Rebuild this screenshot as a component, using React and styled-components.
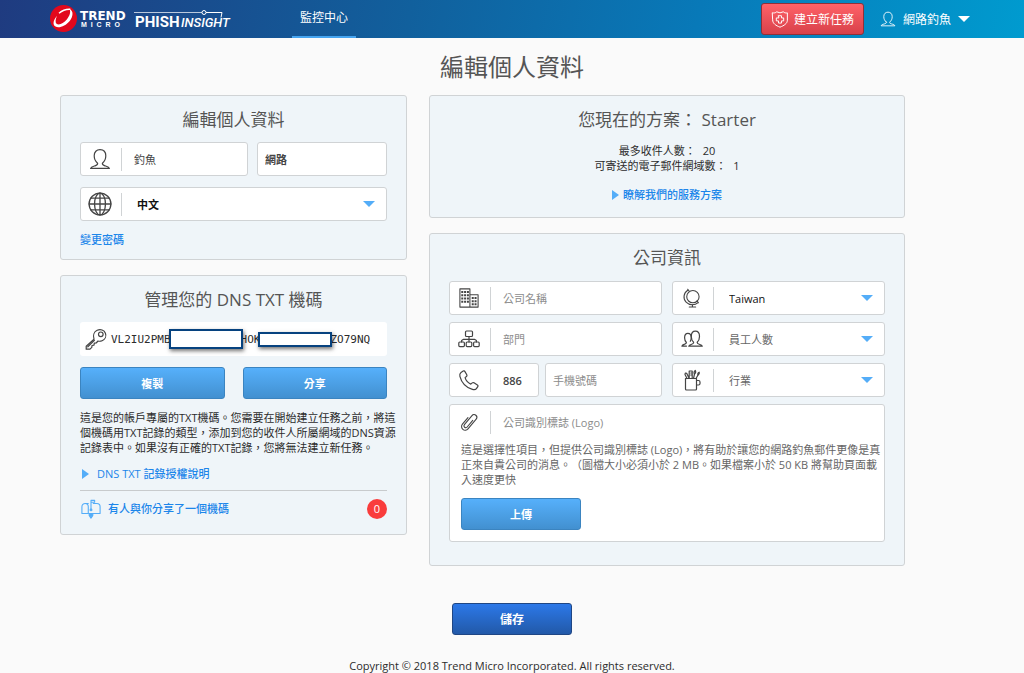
import React, { useState } from "react";
import styled, { createGlobalStyle } from "styled-components";

const GlobalStyle = createGlobalStyle`
  * {
    box-sizing: border-box;
  }
  body {
    margin: 0;
    background: #fafafa;
    color: #2c2c2c;
    font-family: "Open Sans", "Noto Sans CJK TC", sans-serif;
    font-size: 11px;
    line-height: 15px;
  }
  input, select, button {
    font: inherit;
  }
`;

const Header = styled.header`
  display: flex;
  align-items: center;
  height: 38px;
  padding: 0 54px 0 49px;
  background: linear-gradient(100deg, #1f3b80 0%, #11609d 40%, #0879b8 68%, #009bcf 100%);
  color: #fff;
  font-size: 12px;
`;

const HomeLink = styled.a`
  display: block;
  height: 30px;
`;

const Nav = styled.nav`
  flex: 1;
  align-self: stretch;
  margin-left: 61px;
`;

const NavLink = styled.a`
  display: inline-block;
  height: 38px;
  padding: 0 8px;
  border-bottom: 2px solid #45a4f0;
  color: #fff;
  line-height: 36px;
  text-decoration: none;
`;

const NewTaskButton = styled.button`
  display: flex;
  align-items: center;
  gap: 5px;
  height: 32px;
  padding: 0 9px;
  border: 1px solid #8f3038;
  border-radius: 3px;
  background: linear-gradient(#ff6268, #d8414a);
  color: #fff;
`;

const UserButton = styled.button`
  display: flex;
  align-items: center;
  gap: 7px;
  margin-left: 16px;
  padding: 0;
  border: 0;
  background: none;
  color: #fff;
`;

const Caret = styled.span`
  border: solid transparent;
  border-width: 6px 6px 0;
  border-top-color: ${({ color }) => color || "#54adf8"};
`;

const Main = styled.main`
  max-width: 904px;
  margin: 0 auto;
  padding-top: 12px;
`;

const PageTitle = styled.h1`
  margin: 0 0 11px;
  color: #555;
  font-size: 24px;
  font-weight: 400;
  line-height: 34px;
  text-align: center;
`;

const Columns = styled.div`
  display: grid;
  grid-template-columns: 347fr 476fr;
  gap: 22px;
  padding-right: 59px;
`;

const Column = styled.div`
  display: flex;
  flex-direction: column;
  gap: 15px;
`;

const Card = styled.section`
  display: flex;
  flex-direction: column;
  gap: 11px;
  padding: 12px 19px 11px;
  border: 1px solid #d0d3d5;
  border-radius: 3px;
  background: #eff5f9;
`;

const CardTitle = styled.h2`
  margin: 0 0 -1px;
  color: #555;
  font-size: 17px;
  font-weight: 400;
  line-height: 24px;
  text-align: center;
`;

const Row = styled.div`
  display: grid;
  grid-template-columns: ${({ columns }) => columns};
  gap: ${({ gap }) => gap}px;
`;

const Field = styled.label`
  display: flex;
  align-items: center;
  height: 34px;
  min-width: 0;
  border: 1px solid #d0d3d5;
  border-radius: 3px;
  background: #fff;
`;

const FieldIcon = styled.span`
  display: flex;
  flex: none;
  align-items: center;
  justify-content: center;
  width: 41px;
  height: 23px;
  padding-right: 3px;
  border-right: 1px solid #d0d3d5;
`;

const Input = styled.input`
  flex: 1;
  width: 100%;
  min-width: 0;
  height: 32px;
  padding: 0 7px 0 ${({ $alone }) => ($alone ? 7 : 12)}px;
  border: 0;
  outline: 0;
  background: none;
  color: #444;
  font-weight: ${({ $strong }) => ($strong ? 600 : 400)};
  &::placeholder {
    color: #8c8c8c;
  }
`;

const Select = styled.select`
  flex: 1;
  min-width: 0;
  height: 32px;
  padding: 0 0 0 15px;
  border: 0;
  outline: 0;
  appearance: none;
  background: none;
  color: ${({ $empty }) => ($empty ? "#666" : "#111")};
  font-weight: ${({ $strong }) => ($strong ? 600 : 400)};
  & + ${Caret} {
    margin-right: 11px;
    pointer-events: none;
  }
`;

const TextLink = styled.a`
  display: flex;
  align-items: center;
  gap: ${({ $gap }) => $gap || 0}px;
  color: #1c86ea;
  font-weight: 500;
  line-height: 16px;
  text-decoration: none;
`;

const Triangle = styled.span`
  border: solid transparent;
  border-width: 5px 0 5px 7px;
  border-left-color: #54adf8;
`;

const KeyBox = styled.div`
  display: flex;
  align-items: center;
  height: 34px;
  padding: 0 5px;
  border-radius: 3px;
  background: #fff;
  font-family: "DejaVu Sans Mono", monospace;
  svg {
    flex: none;
    margin-right: 4px;
  }
`;

const Redacted = styled.span`
  position: relative;
  flex: none;
  width: 74px;
  height: ${({ height }) => height}px;
  margin: 0 -2px;
  border: 2px solid #06427f;
  background: #fff;
  box-shadow: 1px 2px 4px rgba(0, 0, 0, 0.55);
`;

const BlueButton = styled.button`
  height: 32px;
  border: 1px solid #3b84c0;
  border-radius: 3px;
  background: linear-gradient(#56b0fb, #4290d0);
  color: #fff;
  font-weight: 600;
`;

const Note = styled.p`
  margin: 0 -10px 0 0;
`;

const HelpRow = styled.div`
  padding: 0 0 8px 2px;
  border-bottom: 1px solid #c8cbcd;
`;

const SharedRow = styled.div`
  display: flex;
  align-items: center;
  justify-content: space-between;
  height: 32px;
  margin-top: -11px;
  padding: 8px 0 4px 1px;
`;

const Count = styled.span`
  width: 20px;
  height: 20px;
  border-radius: 50%;
  background: #f93c3c;
  color: #fff;
  line-height: 20px;
  text-align: center;
`;

const PlanList = styled.ul`
  margin: 0;
  padding: 1px 0 0;
  list-style: none;
  text-align: center;
  span {
    margin-left: 4px;
  }
`;

const PlanLink = styled(TextLink)`
  align-self: center;
  padding: 3px 0;
`;

const CompanyForm = styled.div`
  display: flex;
  flex-direction: column;
  gap: 7px;
  padding: 1px 0 12px;
`;

const LogoBox = styled.div`
  padding-bottom: 11px;
  border: 1px solid #d0d3d5;
  border-radius: 3px;
  background: #fff;
`;

const LogoHead = styled.div`
  display: flex;
  align-items: center;
  gap: 12px;
  height: 34px;
  color: #8c8c8c;
`;

const LogoHint = styled.p`
  margin: 3px 0 11px 11px;
  color: #666;
  text-spacing-trim: space-all;
`;

const UploadButton = styled(BlueButton)`
  width: 120px;
  margin-left: 11px;
`;

const SaveButton = styled(BlueButton)`
  display: block;
  width: 120px;
  margin: 37px auto 0;
  border-color: #1f4684;
  background: linear-gradient(#2c78e8, #2259a8);
  font-size: 12px;
`;

const Footer = styled.footer`
  padding-top: 23px;
  text-align: center;
`;

const Icon = ({ size = 22, color = "#444", children }) => (
  <svg
    width={size}
    height={size}
    viewBox="0 0 22 22"
    fill="none"
    stroke={color}
    strokeWidth="1.2"
    strokeLinecap="round"
    strokeLinejoin="round"
    aria-hidden="true"
  >
    {children}
  </svg>
);

const UserIcon = ({ size, color }) => (
  <Icon size={size} color={color}>
    <path d="M8.6 15.2C6.400 13.400 5.200 10.800 5.200 7.800 5.200 3.900 7.600 1.600 11 1.600s5.800 2.300 5.800 6.200c0 3-1.200 5.600-3.400 7.400-.4 1.600.5 2 2.600 2.600 2.400.7 4 1 4.400 2.600H1.600C2 18.800 3.600 18.500 6 17.800c2.100-.6 3-1 2.600-2.600z" />
  </Icon>
);

const GlobeIcon = () => (
  <Icon size={24}>
    <circle cx="11" cy="11" r="10" />
    <ellipse cx="11" cy="11" rx="5" ry="10" />
    <path d="M11 1v20M1 11h20M2.800 5.600h16.400M2.800 16.400h16.400" />
  </Icon>
);

const KeyIcon = () => (
  <Icon>
    <path d="M9 11.200C7.800 7.600 9 3.800 12.200 2.300c3.300-1.500 7-.2 8.200 2.900 1.200 3-.2 6.200-3.300 7.500-1.400.6-2.800.7-4.100.3L11.200 15l-1.900.2-.3 2-2 .3-.2 1.900L5 21.200H1.200v-3z" />
    <circle cx="15.800" cy="6.300" r="2.300" />
    <path d="M2.800 18.800l6.600-6.500" />
  </Icon>
);

const BuildingIcon = () => (
  <Icon size={20}>
    <path d="M1 21V1h11v20zM12 7.500h9V21h-9" />
    <path
      d="M2.500 4.500h8.500M2.500 8h8.500M2.500 11.500h8.500M2.500 15h8.500M14 11h5.500M14 14.500h5.500M14 18h5.500"
      strokeWidth="2.200"
      strokeDasharray="2.200 0.900"
      strokeLinecap="butt"
    />
  </Icon>
);

const OrgIcon = () => (
  <Icon>
    <rect x="7.500" y="3" width="7" height="5.500" rx="1" />
    <rect x="0.800" y="14" width="5.600" height="4.600" rx="1" />
    <rect x="8.200" y="14" width="5.600" height="4.600" rx="1" />
    <rect x="15.600" y="14" width="5.600" height="4.600" rx="1" />
    <path d="M11 8.500V14M3.600 14v-1.500l2-1.200h10.800l2 1.200V14" />
  </Icon>
);

const PhoneIcon = () => (
  <Icon>
    <path d="M3 3.400L5.200 2c.6-.4 1.200-.2 1.600.4l2 3.400c.4.7.2 1.300-.4 1.700L7.100 8.600c.7 2.600 3 5.200 5.700 6.500l1.400-1.200c.6-.5 1.200-.5 1.800-.1l3.400 2.200c.6.4.8 1 .4 1.600l-1.400 2.100c-.8 1.100-2.400 1.200-4 .7C8.300 18.500 3.500 13.500 1.900 7.300 1.500 5.600 1.900 4.200 3 3.400z" />
  </Icon>
);

const DeskGlobeIcon = () => (
  <Icon size={20}>
    <circle cx="12" cy="9.500" r="6.800" />
    <path d="M6.300 1.400L7.700 3.200M6.300 2.400C1.600 5.400.9 11.900 4.500 15.600c3.600 3.700 9.600 3.700 13.200.5M16.500 14.200l1.600 2M11.500 18.300v2.500M8 20.900h7" />
  </Icon>
);

const PeopleIcon = () => (
  <Icon>
    <path d="M12.600 14.200c-1.500-1.400-2.300-3.500-2.300-5.800 0-3.200 1.700-5.200 4.100-5.200s4.100 2 4.100 5.200c0 2.300-.8 4.400-2.300 5.800-.2 1.200.4 1.500 2 2 1.700.5 2.800.9 3.100 2H7.800c.3-1.100 1.300-1.500 2.900-2 1.500-.5 2.100-.8 1.900-2z" />
    <path d="M9.300 13.300c.6-1 .9-2.200.9-3.600C10.200 7 9 5.300 6.900 5.300S3.600 7 3.600 9.700c0 2 .7 3.700 1.800 4.800.1 1-.4 1.200-1.700 1.600-1.500.4-2.500.8-2.800 2h4.600" />
  </Icon>
);

const PencilCupIcon = () => (
  <Icon>
    <path d="M4.500 9.500h11V20a1 1 0 0 1-1 1h-9a1 1 0 0 1-1-1zM15.500 11.500h2a1.500 1.500 0 0 1 1.500 1.500v1.500a1.500 1.500 0 0 1-1.500 1.500h-2" />
    <path d="M6 9.500L4 5.500 4.300 4l1.500.4 2.400 5M8.200 9.500V2h3v7.500M9.800 4h1.400M9.800 6h1.400M12.500 9.500l1-4.500M15 9.500l2-3.500" />
    <path d="M13.500 5c-.9-1-.5-2.800.7-3.600.7 1.200.6 2.600-.7 3.600zM17 6c-.5-1.100.1-2.400 1.200-2.800.4 1.200 0 2.200-1.200 2.800z" />
  </Icon>
);

const ClipIcon = () => (
  <Icon size={20}>
    <path
      d="M13 7v9.500a2 2 0 0 1-4 0V3.500a3 3 0 0 1 6 0v14a4 4 0 0 1-8 0V8"
      transform="rotate(40 11 11)"
    />
  </Icon>
);

const MailboxIcon = () => (
  <Icon size={20} color="#54adf8">
    <path d="M8 5H4.500A3.500 3.500 0 0 0 1 8.500V16h7.500M8 16V8.500A3.500 3.500 0 0 0 4.500 5M13.500 5h4A3.500 3.500 0 0 1 21 8.500V16h-7.500" />
    <path d="M11 11.500V1.500h4v2h-4" />
    <circle cx="11" cy="12" r="1" />
    <path d="M9 16v2l2 3 2-3v-2z" fill="#54adf8" />
  </Icon>
);

const ShieldIcon = () => (
  <Icon size={18} color="#fff">
    <path d="M2 3.500c2 .4 3.500 0 5-1.300l4 1.300 4-1.300c1.500 1.300 3 1.700 5 1.300v9c0 4-4 6.500-9 8.500-5-2-9-4.500-9-8.500z" />
    <path d="M9.200 7h3.600v2.700h2.700v3.600h-2.700V16H9.200v-2.700H6.500V9.700h2.700z" />
  </Icon>
);

const BrandLogo = () => (
  <svg width="182" height="30" viewBox="0 0 182 30" role="img" aria-label="Trend Micro Phish Insight">
    <circle cx="14.500" cy="14.500" r="13.500" fill="#e2081c" />
    <path
      d="M20.300 5c4.500 1.500 4 7.500.4 12-4 5-10.700 7.600-14.200 5.600-3.200-1.900-2.200-6.600 1.500-10.900-1.500 3.500-2 6.600-.5 8 2.300 2 7-.2 10.300-4.200 3-3.700 4.400-8.300 2.500-10.500z"
      fill="#fff"
    />
    <path d="M10 9.300c3-2.600 7-4.300 11.300-4" stroke="#fff" strokeWidth="1.400" fill="none" />
    <g fill="#fff">
      <text x="31" y="16" fontFamily="DejaVu Sans" fontSize="12" fontWeight="700">TREND</text>
      <text x="32" y="23" fontFamily="Liberation Sans" fontSize="7" fontWeight="700" style={{ whiteSpace: "pre" }}>M  I  C  R  O</text>
      <text x="86" y="23" fontFamily="Roboto" fontSize="15" fontWeight="700">PHISH</text>
      <text x="132" y="23" fontFamily="Roboto" fontSize="13" fontStyle="italic" fontWeight="500">INSIGHT</text>
    </g>
    <g stroke="#fff" fill="none">
      <path d="M85 8.500h68" opacity="0.700" />
      <path d="M157 8.500h16l-1 5" />
      <circle cx="155" cy="8.500" r="2" />
    </g>
  </svg>
);

const SelectField = ({ icon, label, options, empty, strong }) => (
  <Field>
    <FieldIcon>{icon}</FieldIcon>
    <Select aria-label={label} $empty={empty} $strong={strong}>
      {options.map(option => (
        <option key={option}>{option}</option>
      ))}
    </Select>
    <Caret />
  </Field>
);

const TextField = ({ icon, label, placeholder, initial = "", strong }) => {
  const [value, setValue] = useState(initial);
  return (
    <Field>
      {icon && <FieldIcon>{icon}</FieldIcon>}
      <Input
        type="text"
        aria-label={label}
        placeholder={placeholder}
        value={value}
        $alone={!icon}
        $strong={strong}
        onChange={({ target }) => setValue(target.value)}
      />
    </Field>
  );
};

export default () => (
  <>
    <GlobalStyle />
    <Header>
      <HomeLink href="#">
        <BrandLogo />
      </HomeLink>
      <Nav>
        <NavLink href="#">監控中心</NavLink>
      </Nav>
      <NewTaskButton type="button">
        <ShieldIcon />
        建立新任務
      </NewTaskButton>
      <UserButton type="button">
        <UserIcon size={16} color="#fff" />
        網路釣魚
        <Caret color="#fff" />
      </UserButton>
    </Header>
    <Main>
      <PageTitle>編輯個人資料</PageTitle>
      <Columns>
        <Column>
          <Card>
            <CardTitle>編輯個人資料</CardTitle>
            <Row columns="168fr 130fr" gap={9}>
              <TextField icon={<UserIcon />} label="名字" initial="釣魚" />
              <TextField label="姓氏" initial="網路" strong />
            </Row>
            <SelectField icon={<GlobeIcon />} label="語言" options={["中文"]} strong />
            <TextLink href="#">變更密碼</TextLink>
          </Card>
          <Card>
            <CardTitle>管理您的 DNS TXT 機碼</CardTitle>
            <KeyBox>
              <KeyIcon />
              VL2IU2PMB
              <Redacted height={20} />
              HOK
              <Redacted height={15} />
              ZO79NQ
            </KeyBox>
            <Row columns="1fr 1fr" gap={18}>
              <BlueButton type="button">複製</BlueButton>
              <BlueButton type="button">分享</BlueButton>
            </Row>
            <Note>
              這是您的帳戶專屬的TXT機碼。您需要在開始建立任務之前，將這個機碼用TXT記錄的類型，添加到您的收件人所屬網域的DNS資源記錄表中。如果沒有正確的TXT記錄，您將無法建立新任務。
            </Note>
            <HelpRow>
              <TextLink href="#" $gap={8}>
                <Triangle />
                DNS TXT 記錄授權說明
              </TextLink>
            </HelpRow>
            <SharedRow>
              <TextLink href="#" $gap={7}>
                <MailboxIcon />
                有人與你分享了一個機碼
              </TextLink>
              <Count>0</Count>
            </SharedRow>
          </Card>
        </Column>
        <Column>
          <Card>
            <CardTitle>您現在的方案： Starter</CardTitle>
            <PlanList>
              <li>
                最多收件人數： <span>20</span>
              </li>
              <li>
                可寄送的電子郵件網域數： <span>1</span>
              </li>
            </PlanList>
            <PlanLink href="#" $gap={4}>
              <Triangle />
              瞭解我們的服務方案
            </PlanLink>
          </Card>
          <Card>
            <CardTitle>公司資訊</CardTitle>
            <CompanyForm>
              <Row columns="1fr 1fr" gap={10}>
                <TextField icon={<BuildingIcon />} label="公司名稱" placeholder="公司名稱" />
                <SelectField icon={<DeskGlobeIcon />} label="國家" options={["Taiwan"]} />
              </Row>
              <Row columns="1fr 1fr" gap={10}>
                <TextField icon={<OrgIcon />} label="部門" placeholder="部門" />
                <SelectField icon={<PeopleIcon />} label="員工人數" options={["員工人數"]} empty />
              </Row>
              <Row columns="1fr 1fr" gap={10}>
                <Row columns="90fr 117fr" gap={6}>
                  <TextField icon={<PhoneIcon />} label="國碼" initial="886" strong />
                  <TextField label="手機號碼" placeholder="手機號碼" />
                </Row>
                <SelectField icon={<PencilCupIcon />} label="行業" options={["行業"]} empty />
              </Row>
              <LogoBox>
                <LogoHead>
                  <FieldIcon>
                    <ClipIcon />
                  </FieldIcon>
                  公司識別標誌 (Logo)
                </LogoHead>
                <LogoHint>
                  這是選擇性項目，但提供公司識別標誌 (Logo)，將有助於讓您的網路釣魚郵件更像是真正來自貴公司的消息。（圖檔大小必須小於 2 MB。如果檔案小於 50 KB 將幫助頁面載入速度更快
                </LogoHint>
                <UploadButton type="button">上傳</UploadButton>
              </LogoBox>
            </CompanyForm>
          </Card>
        </Column>
      </Columns>
      <SaveButton type="button">儲存</SaveButton>
    </Main>
    <Footer>Copyright © 2018 Trend Micro Incorporated. All rights reserved.</Footer>
  </>
);
